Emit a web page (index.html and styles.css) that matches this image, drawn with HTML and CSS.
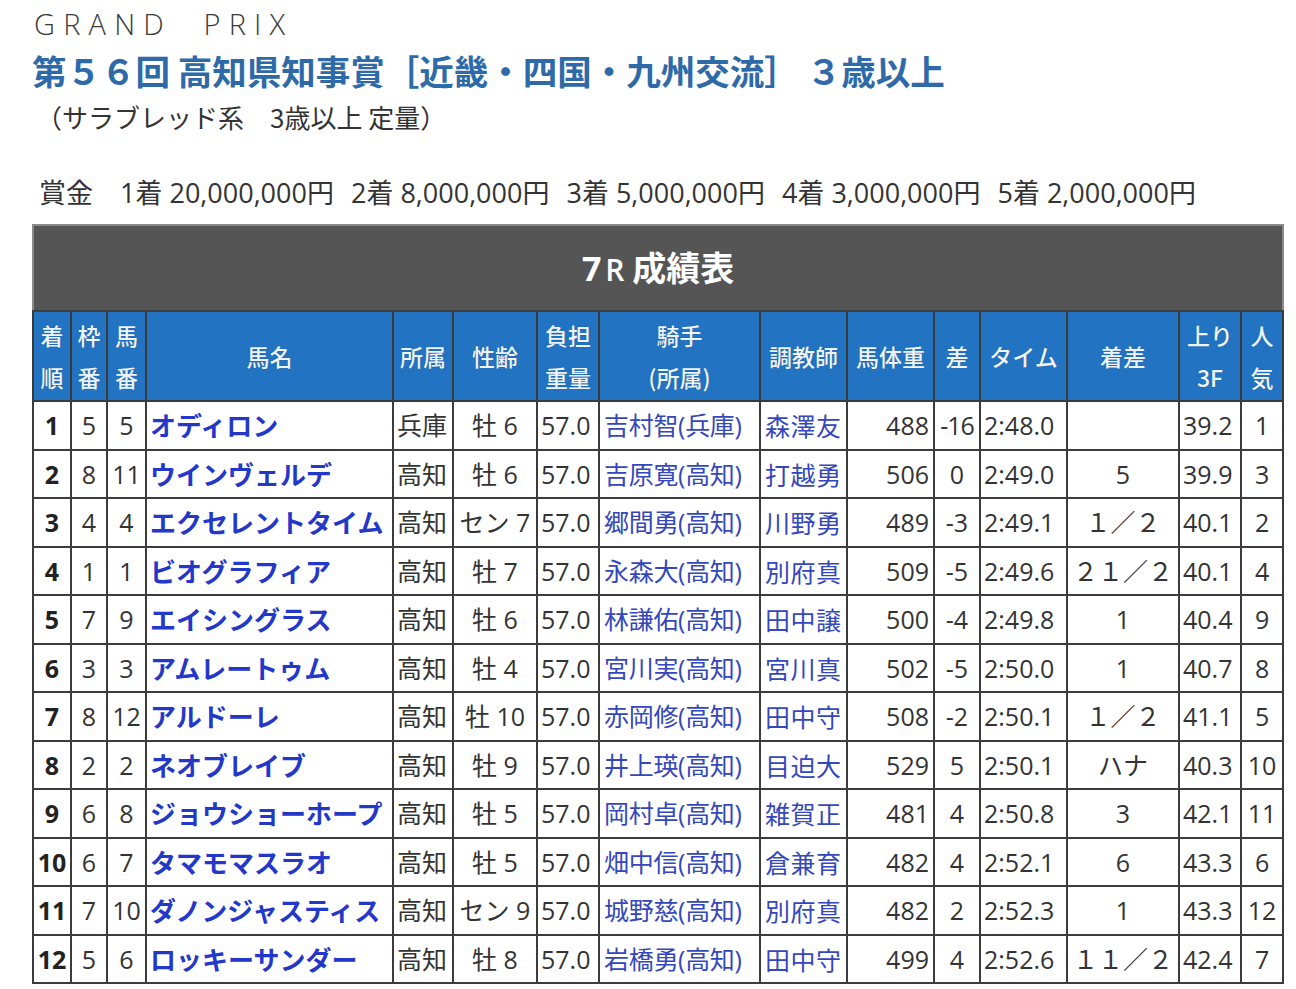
FILE: index.html
```html
<!DOCTYPE html>
<html lang="ja">
<head>
<meta charset="utf-8">
<title>7R 成績表</title>
<link rel="stylesheet" href="styles.css">
</head>
<body>
<div class="page">
  <div class="brand">GRAND&nbsp;&nbsp;PRIX</div>
  <h1 class="race-title">第５６回 高知県知事賞［近畿・四国・九州交流］ ３歳以上</h1>
  <p class="race-cond">（サラブレッド系　3歳以上 定量）</p>
  <p class="prize"><span class="prize-label">賞金</span><span class="prize-item">1着 20,000,000円</span><span class="prize-item">2着 8,000,000円</span><span class="prize-item">3着 5,000,000円</span><span class="prize-item">4着 3,000,000円</span><span class="prize-item">5着 2,000,000円</span></p>

  <table class="result">
    <colgroup>
      <col class="c-rank"><col class="c-waku"><col class="c-uma"><col class="c-name"><col class="c-aff"><col class="c-sex"><col class="c-wt"><col class="c-jockey"><col class="c-trainer"><col class="c-body"><col class="c-diff"><col class="c-time"><col class="c-margin"><col class="c-3f"><col class="c-pop">
    </colgroup>
    <thead>
      <tr><th colspan="15" class="title-bar"><span class="tb-num">7</span><span class="tb-r">R</span> 成績表</th></tr>
      <tr class="head">
        <th>着<br>順</th><th>枠<br>番</th><th>馬<br>番</th><th>馬名</th><th>所属</th><th>性齢</th><th>負担<br>重量</th><th>騎手<br>(所属)</th><th>調教師</th><th>馬体重</th><th>差</th><th>タイム</th><th>着差</th><th>上り<br>3F</th><th>人<br>気</th>
      </tr>
    </thead>
    <tbody>
      <tr><td class="rank">1</td><td class="ctr">5</td><td class="ctr">5</td><td class="horse">オディロン</td><td>兵庫</td><td class="ctr">牡 6</td><td>57.0</td><td class="jockey">吉村智(兵庫)</td><td class="trainer">森澤友</td><td class="rt">488</td><td class="ctr diff">-16</td><td>2:48.0</td><td class="ctr"></td><td>39.2</td><td class="ctr">1</td></tr>
      <tr><td class="rank">2</td><td class="ctr">8</td><td class="ctr">11</td><td class="horse">ウインヴェルデ</td><td>高知</td><td class="ctr">牡 6</td><td>57.0</td><td class="jockey">吉原寛(高知)</td><td class="trainer">打越勇</td><td class="rt">506</td><td class="ctr">0</td><td>2:49.0</td><td class="ctr">5</td><td>39.9</td><td class="ctr">3</td></tr>
      <tr><td class="rank">3</td><td class="ctr">4</td><td class="ctr">4</td><td class="horse">エクセレントタイム</td><td>高知</td><td class="ctr">セン 7</td><td>57.0</td><td class="jockey">郷間勇(高知)</td><td class="trainer">川野勇</td><td class="rt">489</td><td class="ctr">-3</td><td>2:49.1</td><td class="ctr">１／２</td><td>40.1</td><td class="ctr">2</td></tr>
      <tr><td class="rank">4</td><td class="ctr">1</td><td class="ctr">1</td><td class="horse">ビオグラフィア</td><td>高知</td><td class="ctr">牡 7</td><td>57.0</td><td class="jockey">永森大(高知)</td><td class="trainer">別府真</td><td class="rt">509</td><td class="ctr">-5</td><td>2:49.6</td><td class="ctr">２１／２</td><td>40.1</td><td class="ctr">4</td></tr>
      <tr><td class="rank">5</td><td class="ctr">7</td><td class="ctr">9</td><td class="horse">エイシングラス</td><td>高知</td><td class="ctr">牡 6</td><td>57.0</td><td class="jockey">林謙佑(高知)</td><td class="trainer">田中譲</td><td class="rt">500</td><td class="ctr">-4</td><td>2:49.8</td><td class="ctr">1</td><td>40.4</td><td class="ctr">9</td></tr>
      <tr><td class="rank">6</td><td class="ctr">3</td><td class="ctr">3</td><td class="horse">アムレートゥム</td><td>高知</td><td class="ctr">牡 4</td><td>57.0</td><td class="jockey">宮川実(高知)</td><td class="trainer">宮川真</td><td class="rt">502</td><td class="ctr">-5</td><td>2:50.0</td><td class="ctr">1</td><td>40.7</td><td class="ctr">8</td></tr>
      <tr><td class="rank">7</td><td class="ctr">8</td><td class="ctr">12</td><td class="horse">アルドーレ</td><td>高知</td><td class="ctr">牡 10</td><td>57.0</td><td class="jockey">赤岡修(高知)</td><td class="trainer">田中守</td><td class="rt">508</td><td class="ctr">-2</td><td>2:50.1</td><td class="ctr">１／２</td><td>41.1</td><td class="ctr">5</td></tr>
      <tr><td class="rank">8</td><td class="ctr">2</td><td class="ctr">2</td><td class="horse">ネオブレイブ</td><td>高知</td><td class="ctr">牡 9</td><td>57.0</td><td class="jockey">井上瑛(高知)</td><td class="trainer">目迫大</td><td class="rt">529</td><td class="ctr">5</td><td>2:50.1</td><td class="ctr">ハナ</td><td>40.3</td><td class="ctr">10</td></tr>
      <tr><td class="rank">9</td><td class="ctr">6</td><td class="ctr">8</td><td class="horse">ジョウショーホープ</td><td>高知</td><td class="ctr">牡 5</td><td>57.0</td><td class="jockey">岡村卓(高知)</td><td class="trainer">雑賀正</td><td class="rt">481</td><td class="ctr">4</td><td>2:50.8</td><td class="ctr">3</td><td>42.1</td><td class="ctr">11</td></tr>
      <tr><td class="rank">10</td><td class="ctr">6</td><td class="ctr">7</td><td class="horse">タマモマスラオ</td><td>高知</td><td class="ctr">牡 5</td><td>57.0</td><td class="jockey">畑中信(高知)</td><td class="trainer">倉兼育</td><td class="rt">482</td><td class="ctr">4</td><td>2:52.1</td><td class="ctr">6</td><td>43.3</td><td class="ctr">6</td></tr>
      <tr><td class="rank">11</td><td class="ctr">7</td><td class="ctr">10</td><td class="horse">ダノンジャスティス</td><td>高知</td><td class="ctr">セン 9</td><td>57.0</td><td class="jockey">城野慈(高知)</td><td class="trainer">別府真</td><td class="rt">482</td><td class="ctr">2</td><td>2:52.3</td><td class="ctr">1</td><td>43.3</td><td class="ctr">12</td></tr>
      <tr><td class="rank">12</td><td class="ctr">5</td><td class="ctr">6</td><td class="horse">ロッキーサンダー</td><td>高知</td><td class="ctr">牡 8</td><td>57.0</td><td class="jockey">岩橋勇(高知)</td><td class="trainer">田中守</td><td class="rt">499</td><td class="ctr">4</td><td>2:52.6</td><td class="ctr">１１／２</td><td>42.4</td><td class="ctr">7</td></tr>
    </tbody>
  </table>
</div>
</body>
</html>
```

FILE: styles.css
```css
html, body {
  margin: 0;
  padding: 0;
  background: #ffffff;
}

body {
  font-family: "Open Sans", "Noto Sans CJK JP", sans-serif;
  color: #333333;
}

.page {
  width: 1250px;
  padding: 6px 0 0 32px;
}

.brand {
  font-family: "Open Sans", sans-serif;
  font-weight: 300;
  font-size: 29px;
  line-height: 36px;
  letter-spacing: 8.2px;
  color: #3a3a3a;
  margin-left: 2px;
}

.race-title {
  font-family: "Noto Sans CJK JP", sans-serif;
  font-size: 34.5px;
  font-weight: 700;
  line-height: 52px;
  color: #2f6aa8;
  margin: 2px 0 0 0;
}

.race-cond {
  font-family: "Noto Sans CJK JP", sans-serif;
  font-size: 26px;
  line-height: 38px;
  margin: 2px 0 0 4px;
  color: #333;
}

.prize {
  font-family: "Open Sans", "Noto Sans CJK JP", sans-serif;
  font-size: 27px;
  line-height: 38px;
  margin: 38px 0 12px 7px;
  color: #333;
  display: flex;
  gap: 17px;
}

.prize-label {
  margin-right: 10px;
}

.result {
  width: 1250px;
  border-collapse: collapse;
  table-layout: fixed;
  border: 2px solid #8a8a8a;
  font-family: "Open Sans", "Noto Sans CJK JP", sans-serif;
  font-size: 25px;
}

.c-rank { width: 38px; }
.c-waku { width: 36px; }
.c-uma { width: 39px; }
.c-name { width: 247px; }
.c-aff { width: 60px; }
.c-sex { width: 84px; }
.c-wt { width: 62px; }
.c-jockey { width: 161px; }
.c-trainer { width: 87px; }
.c-body { width: 87px; }
.c-diff { width: 46px; }
.c-time { width: 87px; }
.c-margin { width: 112px; }
.c-3f { width: 62px; }
.c-pop { width: 42px; }

.title-bar {
  background: #555555;
  color: #ffffff;
  height: 80px;
  font-family: "Noto Sans CJK JP", sans-serif;
  font-size: 34px;
  font-weight: 700;
  text-align: center;
  border: 2px solid #8a8a8a;
  border-bottom: 2px solid #3d3d3d;
  padding: 0 0 4px 0;
}

.tb-num {
  font-family: "Open Sans", sans-serif;
  font-weight: 700;
}

.tb-r {
  font-family: "Open Sans", sans-serif;
  font-weight: 600;
  font-size: 30px;
  margin-left: 4px;
}

.head th {
  background: #2274c2;
  color: #eef4fb;
  font-family: "Noto Sans CJK JP", sans-serif;
  font-weight: 500;
  font-size: 23px;
  line-height: 42px;
  height: 88px;
  padding: 0;
  border: 2px solid #3a3a3a;
  text-shadow: 0 0 1px rgba(20, 40, 80, 0.5);
  white-space: nowrap;
  overflow: hidden;
}

tbody td {
  border: 2px solid #3c3c3c;
  height: 46.5px;
  padding: 0 2px 0 3px;
  color: #333333;
  white-space: nowrap;
  overflow: hidden;
  line-height: 46px;
}

td.ctr { text-align: center; padding: 0; }
td.rt { text-align: right; padding-right: 4px; }
td.diff { letter-spacing: -1px; }

td.rank {
  text-align: center;
  font-weight: 700;
  color: #222222;
  padding: 0;
}

td.horse {
  font-family: "Noto Sans CJK JP", sans-serif;
  font-weight: 700;
  color: #2338c8;
  padding-left: 3px;
  font-size: 26px;
}

td.jockey {
  color: #3547bd;
  font-size: 25px;
  letter-spacing: -0.3px;
  padding-left: 4px;
}

td.trainer {
  font-family: "Noto Sans CJK JP", sans-serif;
  color: #3547bd;
  font-size: 25px;
  letter-spacing: 0.5px;
  padding-left: 4px;
}
```
